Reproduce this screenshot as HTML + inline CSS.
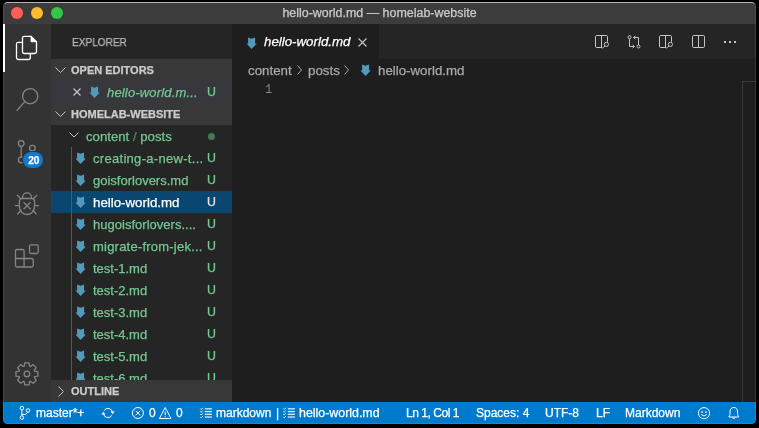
<!DOCTYPE html>
<html><head><meta charset="utf-8">
<style>
*{margin:0;padding:0;box-sizing:border-box}
html,body{width:759px;height:428px;background:#000;overflow:hidden;font-family:"Liberation Sans",sans-serif}
#win{position:absolute;left:0;top:0;width:759px;height:428px;clip-path:inset(2px 3px 4px 3px round 4.5px);background:#1e1e1e}
.a{position:absolute}
.t{position:absolute;white-space:pre;line-height:1;will-change:transform;-webkit-text-stroke:0.25px currentColor}
svg{position:absolute;overflow:visible}
#title{left:3px;top:2px;width:753px;height:22px;background:#3c3c3c}
#act{left:3px;top:24px;width:48px;height:378px;background:#333}
#side{left:51px;top:24px;width:181px;height:378px;background:#252526}
#tabs{left:232px;top:24px;width:524px;height:35px;background:#252526}
#tab{left:232px;top:24px;width:147px;height:35px;background:#1e1e1e}
#status{left:3px;top:402px;width:753px;height:22px;background:#007acc}
.hdr{position:absolute;left:51px;width:181px;height:22px;background:#383838}
.g{color:#73c991}
.row{position:absolute;left:51px;width:181px;height:22px}
.fn{position:absolute;left:93px;font-size:13px;color:#73c991;white-space:pre;line-height:22px;top:0}
.u{position:absolute;left:207px;font-size:13px;color:#73c991;line-height:22px;top:0}
.st{position:absolute;top:402px;font-size:12px;color:#fff;line-height:22px;white-space:pre;will-change:transform;-webkit-text-stroke:0.25px currentColor}
#border{position:absolute;left:3px;top:2px;width:753px;height:422px;border-radius:4.5px;border:1px solid rgba(255,255,255,0.1);border-top-color:rgba(255,255,255,0.6);pointer-events:none}
</style></head><body>
<div id="win">
  <div id="title" class="a"></div>
  <div id="act" class="a"></div>
  <div id="side" class="a"></div>
  <div id="tabs" class="a"></div>
  <div id="tab" class="a"></div>
  <div id="status" class="a"></div>

  <!-- traffic lights -->
  <div class="a" style="left:11px;top:7px;width:12px;height:12px;border-radius:50%;background:#fe5f57"></div>
  <div class="a" style="left:31px;top:7px;width:12px;height:12px;border-radius:50%;background:#febc2e"></div>
  <div class="a" style="left:51px;top:7px;width:12px;height:12px;border-radius:50%;background:#33c748"></div>
  <div class="t" style="left:3px;width:753px;text-align:center;top:7px;font-size:12.45px;color:#cccccc">hello-world.md — homelab-website</div>

  <!-- activity bar -->
  <div class="a" style="left:3px;top:24px;width:2px;height:48px;background:#fff"></div>

  <!-- files icon -->
  <svg class="a" style="left:0;top:0" width="759" height="428" fill="none" stroke-width="1.3">
    <path d="M22.5 42.3 H18.3 a1.8 1.8 0 0 0 -1.8 1.8 V57.7 a1.8 1.8 0 0 0 1.8 1.8 H28.5 a1.8 1.8 0 0 0 1.8 -1.8 V53.8" stroke="#ffffff"/>
    <path d="M24.3 36.3 H31 L36.5 41.8 V51.7 a1.8 1.8 0 0 1 -1.8 1.8 H24.3 a1.8 1.8 0 0 1 -1.8 -1.8 V38.1 a1.8 1.8 0 0 1 1.8 -1.8 Z" stroke="#ffffff"/>
    <path d="M31 36.3 L36.5 41.8 H31 Z" fill="#ffffff" stroke="#ffffff" stroke-width="0.8"/>
    <!-- search -->
    <circle cx="30.2" cy="96.2" r="7.6" stroke="#858585"/>
    <path d="M24.8 101.6 L16.8 110.8" stroke="#858585"/>
    <!-- git -->
    <circle cx="21.2" cy="143.5" r="2.8" stroke="#858585"/>
    <circle cx="32.4" cy="148.2" r="2.8" stroke="#858585"/>
    <circle cx="21.2" cy="160" r="2.8" stroke="#858585"/>
    <path d="M21.2 146.1 V157.4" stroke="#858585"/>
    <path d="M32.4 150.8 C32.4 154 28 155.5 23 158" stroke="#858585"/>
    <!-- debug -->
    <path d="M22.6 198.5 V197.2 a4.4 4.4 0 0 1 8.8 0 V198.5" stroke="#858585"/>
    <path d="M21.6 198.5 H32.4 Q34.6 198.5 34.6 202.5 V206 C34.6 211 31.5 214.5 27 214.5 C22.5 214.5 19.4 211 19.4 206 V202.5 Q19.4 198.5 21.6 198.5 Z" stroke="#858585"/>
    <path d="M23.5 202.2 L30.5 209.2 M30.5 202.2 L23.5 209.2" stroke="#858585"/>
    <path d="M17 195 L21 199 M37 195 L33 199 M14.8 205.6 H19.8 M34.2 205.6 H39 M17.4 214.3 L21.5 210 M36.6 214.3 L32.5 210" stroke="#858585"/>
    <!-- extensions -->
    <path d="M17 249.5 H22.6 a1.5 1.5 0 0 1 1.5 1.5 V258.5 H31.7 a1.5 1.5 0 0 1 1.5 1.5 V265.5 a1.5 1.5 0 0 1 -1.5 1.5 H17 a1.5 1.5 0 0 1 -1.5 -1.5 V251 a1.5 1.5 0 0 1 1.5 -1.5 Z" stroke="#858585"/>
    <path d="M15.5 258.5 H24.1 V267" stroke="#858585"/>
    <rect x="29.5" y="244.8" width="8.7" height="8.7" rx="1.5" stroke="#858585"/>
  </svg>
  <!-- badge -->
  <div class="a" style="left:22px;top:151px;width:22px;height:18px;border-radius:9px;background:#333"></div>
  <div class="a" style="left:23.3px;top:152px;width:19.6px;height:16px;border-radius:8px;background:#0e7ad1"></div>
  <div class="t" style="left:23.5px;top:152.8px;width:19.6px;height:16px;line-height:16px;text-align:center;font-size:10.2px;font-weight:bold;color:#fff">20</div>
  <!-- gear -->
  <svg class="a" style="left:0;top:0" width="759" height="428" fill="none" stroke="#858585" stroke-width="1.3">
    <path id="gear" d="M24.17 366.17 L24.78 362.90 L29.02 362.90 L29.63 366.17 L30.43 366.50 L33.18 364.63 L36.17 367.62 L34.30 370.37 L34.63 371.17 L37.90 371.78 L37.90 376.02 L34.63 376.63 L34.30 377.43 L36.17 380.18 L33.18 383.17 L30.43 381.30 L29.63 381.63 L29.02 384.90 L24.78 384.90 L24.17 381.63 L23.37 381.30 L20.62 383.17 L17.63 380.18 L19.50 377.43 L19.17 376.63 L15.90 376.02 L15.90 371.78 L19.17 371.17 L19.50 370.37 L17.63 367.62 L20.62 364.63 L23.37 366.50 Z" stroke-linejoin="round"/>
    <circle cx="26.9" cy="373.9" r="2.8"/>
  </svg>

  <!-- sidebar -->
  <div class="t" style="left:71.5px;top:37px;font-size:11.2px;transform:scaleX(0.9);transform-origin:0 0;color:#bbbbbb">EXPLORER</div>
  <div class="hdr" style="top:59px"></div>
  <div class="row" style="top:81px;background:#37373d"></div>
  <div class="hdr" style="top:103px"></div>
  <div class="t" style="left:71px;top:65px;font-size:11px;font-weight:bold;color:#cccccc">OPEN EDITORS</div>
  <div class="t" style="left:71px;top:109px;font-size:11px;font-weight:bold;color:#cccccc">HOMELAB-WEBSITE</div>

  <div class="row" style="top:191px;background:#094771"></div>
  <svg class="a" style="left:69px;top:132px" width="10" height="6" viewBox="0 0 10 6"><path d="M0.5 0.5 L5 5 L9.5 0.5" fill="none" stroke="#c5c5c5" stroke-width="1"/></svg>
  <div class="t g" style="left:85.8px;top:126px;font-size:13.2px;line-height:22px">content <span style="color:#4f8a60">/</span> posts</div>
  <div class="a" style="left:207.5px;top:132.5px;width:7px;height:7px;border-radius:50%;background:#48785a"></div>
  <svg class="a" style="left:76px;top:152px" width="11" height="13" viewBox="0 0 11 13"><path d="M1.1 0.6 L4.6 1.7 L8.1 0.6 L8.1 6.4 L9.8 6.4 L4.6 12 L-0.6 6.4 L1.1 6.4 Z" fill="#519aba"/></svg>
  <div class="t" style="left:93px;top:148px;font-size:13px;line-height:22px;color:#73c991;letter-spacing:0.3px">creating-a-new-t...</div>
  <div class="t" style="left:207.1px;top:147px;font-size:12.4px;line-height:22px;color:#73c991">U</div>
  <svg class="a" style="left:76px;top:174px" width="11" height="13" viewBox="0 0 11 13"><path d="M1.1 0.6 L4.6 1.7 L8.1 0.6 L8.1 6.4 L9.8 6.4 L4.6 12 L-0.6 6.4 L1.1 6.4 Z" fill="#519aba"/></svg>
  <div class="t" style="left:93px;top:170px;font-size:13px;line-height:22px;color:#73c991">goisforlovers.md</div>
  <div class="t" style="left:207.1px;top:169px;font-size:12.4px;line-height:22px;color:#73c991">U</div>
  <svg class="a" style="left:76px;top:196px" width="11" height="13" viewBox="0 0 11 13"><path d="M1.1 0.6 L4.6 1.7 L8.1 0.6 L8.1 6.4 L9.8 6.4 L4.6 12 L-0.6 6.4 L1.1 6.4 Z" fill="#519aba"/></svg>
  <div class="t" style="left:93px;top:192px;font-size:13.3px;line-height:22px;color:#ffffff">hello-world.md</div>
  <div class="t" style="left:207.1px;top:191px;font-size:12.4px;line-height:22px;color:#e0e0e0">U</div>
  <svg class="a" style="left:76px;top:218px" width="11" height="13" viewBox="0 0 11 13"><path d="M1.1 0.6 L4.6 1.7 L8.1 0.6 L8.1 6.4 L9.8 6.4 L4.6 12 L-0.6 6.4 L1.1 6.4 Z" fill="#519aba"/></svg>
  <div class="t" style="left:93px;top:214px;font-size:13px;line-height:22px;color:#73c991;letter-spacing:0.02px">hugoisforlovers....</div>
  <div class="t" style="left:207.1px;top:213px;font-size:12.4px;line-height:22px;color:#73c991">U</div>
  <svg class="a" style="left:76px;top:240px" width="11" height="13" viewBox="0 0 11 13"><path d="M1.1 0.6 L4.6 1.7 L8.1 0.6 L8.1 6.4 L9.8 6.4 L4.6 12 L-0.6 6.4 L1.1 6.4 Z" fill="#519aba"/></svg>
  <div class="t" style="left:93px;top:236px;font-size:13px;line-height:22px;color:#73c991;letter-spacing:0.22px">migrate-from-jek...</div>
  <div class="t" style="left:207.1px;top:235px;font-size:12.4px;line-height:22px;color:#73c991">U</div>
  <svg class="a" style="left:76px;top:262px" width="11" height="13" viewBox="0 0 11 13"><path d="M1.1 0.6 L4.6 1.7 L8.1 0.6 L8.1 6.4 L9.8 6.4 L4.6 12 L-0.6 6.4 L1.1 6.4 Z" fill="#519aba"/></svg>
  <div class="t" style="left:93px;top:258px;font-size:13px;line-height:22px;color:#73c991">test-1.md</div>
  <div class="t" style="left:207.1px;top:257px;font-size:12.4px;line-height:22px;color:#73c991">U</div>
  <svg class="a" style="left:76px;top:284px" width="11" height="13" viewBox="0 0 11 13"><path d="M1.1 0.6 L4.6 1.7 L8.1 0.6 L8.1 6.4 L9.8 6.4 L4.6 12 L-0.6 6.4 L1.1 6.4 Z" fill="#519aba"/></svg>
  <div class="t" style="left:93px;top:280px;font-size:13px;line-height:22px;color:#73c991">test-2.md</div>
  <div class="t" style="left:207.1px;top:279px;font-size:12.4px;line-height:22px;color:#73c991">U</div>
  <svg class="a" style="left:76px;top:306px" width="11" height="13" viewBox="0 0 11 13"><path d="M1.1 0.6 L4.6 1.7 L8.1 0.6 L8.1 6.4 L9.8 6.4 L4.6 12 L-0.6 6.4 L1.1 6.4 Z" fill="#519aba"/></svg>
  <div class="t" style="left:93px;top:302px;font-size:13px;line-height:22px;color:#73c991">test-3.md</div>
  <div class="t" style="left:207.1px;top:301px;font-size:12.4px;line-height:22px;color:#73c991">U</div>
  <svg class="a" style="left:76px;top:328px" width="11" height="13" viewBox="0 0 11 13"><path d="M1.1 0.6 L4.6 1.7 L8.1 0.6 L8.1 6.4 L9.8 6.4 L4.6 12 L-0.6 6.4 L1.1 6.4 Z" fill="#519aba"/></svg>
  <div class="t" style="left:93px;top:324px;font-size:13px;line-height:22px;color:#73c991">test-4.md</div>
  <div class="t" style="left:207.1px;top:323px;font-size:12.4px;line-height:22px;color:#73c991">U</div>
  <svg class="a" style="left:76px;top:350px" width="11" height="13" viewBox="0 0 11 13"><path d="M1.1 0.6 L4.6 1.7 L8.1 0.6 L8.1 6.4 L9.8 6.4 L4.6 12 L-0.6 6.4 L1.1 6.4 Z" fill="#519aba"/></svg>
  <div class="t" style="left:93px;top:346px;font-size:13px;line-height:22px;color:#73c991">test-5.md</div>
  <div class="t" style="left:207.1px;top:345px;font-size:12.4px;line-height:22px;color:#73c991">U</div>
  <svg class="a" style="left:76px;top:372px" width="11" height="13" viewBox="0 0 11 13"><path d="M1.1 0.6 L4.6 1.7 L8.1 0.6 L8.1 6.4 L9.8 6.4 L4.6 12 L-0.6 6.4 L1.1 6.4 Z" fill="#519aba"/></svg>
  <div class="t" style="left:93px;top:368px;font-size:13px;line-height:22px;color:#73c991">test-6.md</div>
  <div class="t" style="left:207.1px;top:367px;font-size:12.4px;line-height:22px;color:#73c991">U</div>
  <div class="a" style="left:71px;top:147px;width:1px;height:233px;background:#585858"></div>
  <svg class="a" style="left:55px;top:67px" width="11" height="6" viewBox="0 0 11 6"><path d="M0.5 0.5 L5.5 5.5 L10.5 0.5" fill="none" stroke="#c5c5c5" stroke-width="1"/></svg>
  <svg class="a" style="left:55px;top:111px" width="11" height="6" viewBox="0 0 11 6"><path d="M0.5 0.5 L5.5 5.5 L10.5 0.5" fill="none" stroke="#c5c5c5" stroke-width="1"/></svg>
  <svg class="a" style="left:73px;top:88px" width="8" height="8" viewBox="0 0 8 8"><path d="M0.5 0.5 L7.5 7.5 M7.5 0.5 L0.5 7.5" fill="none" stroke="#c5c5c5" stroke-width="1.15"/></svg>
  <svg class="a" style="left:90px;top:86px" width="11" height="13" viewBox="0 0 11 13"><path d="M1.1 0.6 L4.6 1.7 L8.1 0.6 L8.1 6.4 L9.8 6.4 L4.6 12 L-0.6 6.4 L1.1 6.4 Z" fill="#519aba"/></svg>
  <div class="t" style="left:107px;top:82px;font-size:13px;line-height:22px;color:#73c991;font-style:italic;letter-spacing:0.17px">hello-world.m...</div>
  <div class="t" style="left:207.1px;top:81px;font-size:12.4px;line-height:22px;color:#73c991">U</div>
  <div class="hdr" style="top:380px"></div>
  <div class="t" style="left:71px;top:386px;font-size:11px;font-weight:bold;color:#cccccc">OUTLINE</div>
  <svg class="a" style="left:58px;top:386px" width="6" height="11" viewBox="0 0 6 11"><path d="M0.5 0.5 L5.5 5.5 L0.5 10.5" fill="none" stroke="#c5c5c5" stroke-width="1"/></svg>

  <!-- editor -->

  <!-- tab -->
  <svg class="a" style="left:247px;top:36.5px" width="11" height="13" viewBox="0 0 11 13"><path d="M1.1 0.6 L4.6 1.7 L8.1 0.6 L8.1 6.4 L9.8 6.4 L4.6 12 L-0.6 6.4 L1.1 6.4 Z" fill="#519aba"/></svg>
  <div class="t" style="left:264px;top:35px;font-size:13.3px;color:#ffffff;font-style:italic">hello-world.md</div>
  <svg class="a" style="left:358px;top:38px" width="9" height="9" viewBox="0 0 9 9"><path d="M0.5 0.5 L8.5 8.5 M8.5 0.5 L0.5 8.5" fill="none" stroke="#c5c5c5" stroke-width="1.15"/></svg>
  <!-- breadcrumbs -->
  <div class="t" style="left:248px;top:64px;font-size:13.3px;color:#a9a9a9">content</div>
  <svg class="a" style="left:297px;top:65px" width="5" height="10" viewBox="0 0 5 10"><path d="M0.5 0.5 L4.5 5 L0.5 9.5" fill="none" stroke="#a9a9a9" stroke-width="1"/></svg>
  <div class="t" style="left:308px;top:64px;font-size:13.3px;color:#a9a9a9">posts</div>
  <svg class="a" style="left:344px;top:65px" width="5" height="10" viewBox="0 0 5 10"><path d="M0.5 0.5 L4.5 5 L0.5 9.5" fill="none" stroke="#a9a9a9" stroke-width="1"/></svg>
  <svg class="a" style="left:361px;top:64px" width="11" height="13" viewBox="0 0 11 13"><path d="M1.1 0.6 L4.6 1.7 L8.1 0.6 L8.1 6.4 L9.8 6.4 L4.6 12 L-0.6 6.4 L1.1 6.4 Z" fill="#519aba"/></svg>
  <div class="t" style="left:377.5px;top:64px;font-size:13.3px;color:#a9a9a9">hello-world.md</div>
  <div class="t" style="left:265px;top:84px;font-size:12px;color:#858585;font-family:'Liberation Mono',monospace;-webkit-text-stroke:0">1</div>
  <!-- editor actions -->
  <svg class="a" style="left:0;top:0" width="759" height="428" fill="none" stroke="#c5c5c5" stroke-width="1">
    <path d="M602.2 47.5 H596.7 Q595.5 47.5 595.5 46.3 V36.7 Q595.5 35.5 596.7 35.5 H606.3 Q607.5 35.5 607.5 36.7 V41.8"/>
    <path d="M601.5 35.5 V47.5"/>
    <circle cx="606.4" cy="44.4" r="2.1"/>
    <path d="M604.9 45.9 L602.3 48.5"/>
    <path d="M666.2 47.5 H660.7 Q659.5 47.5 659.5 46.3 V36.7 Q659.5 35.5 660.7 35.5 H670.3 Q671.5 35.5 671.5 36.7 V41.8"/>
    <path d="M665.5 35.5 V47.5"/>
    <circle cx="670.4" cy="44.4" r="2.1"/>
    <path d="M668.9 45.9 L666.3 48.5"/>
    <circle cx="629.5" cy="37.2" r="1.5"/>
    <path d="M629.5 38.7 V46.5 H634.2"/><path d="M632.6 44.7 L634.4 46.5 L632.6 48.3"/>
    <circle cx="638.5" cy="46.5" r="1.5"/>
    <path d="M638.5 45 V37.5 H633.6"/><path d="M635.4 35.7 L633.6 37.5 L635.4 39.3"/>
    <path d="M693.7 35.5 H703.3 Q704.5 35.5 704.5 36.7 V46.3 Q704.5 47.5 703.3 47.5 H693.7 Q692.5 47.5 692.5 46.3 V36.7 Q692.5 35.5 693.7 35.5 Z"/>
    <path d="M698.5 35.5 V47.5"/>
  </svg>
  <div class="a" style="left:724px;top:41px;width:2px;height:2px;background:#c5c5c5"></div>
  <div class="a" style="left:729px;top:41px;width:2px;height:2px;background:#c5c5c5"></div>
  <div class="a" style="left:734px;top:41px;width:2px;height:2px;background:#c5c5c5"></div>
  <div class="a" style="left:742px;top:81px;width:1px;height:321px;background:#3a3a3a"></div>
  <div class="a" style="left:742px;top:81px;width:14px;height:1px;background:#3a3a3a"></div>


  <!-- status bar -->
  <svg class="a" style="left:0;top:0" width="759" height="428" fill="none" stroke="#ffffff" stroke-width="1">
    <!-- branch -->
    <circle cx="21.9" cy="408.1" r="1.8"/>
    <circle cx="21.9" cy="417.6" r="1.8"/>
    <circle cx="28" cy="410.5" r="1.8"/>
    <path d="M21.9 409.9 V415.8"/>
    <path d="M27.6 412.3 L25.8 414.4 H21.9"/>
    <!-- sync -->
    <path d="M104.14 410.49 A4.6 4.6 0 0 1 112.53 412.2"/>
    <path d="M111.98 415.3 A4.6 4.6 0 0 1 103.47 413.8"/>
    <!-- error -->
    <circle cx="137.9" cy="413" r="5.5"/>
    <path d="M135.6 410.7 L140.2 415.3 M140.2 410.7 L135.6 415.3"/>
    <!-- warning -->
    <path d="M165.2 407.5 L171 418.5 H159.4 Z" stroke-linejoin="round"/>
    <path d="M165.2 411.5 V415.3 M165.2 416.3 V417.3"/>
    <!-- smiley -->
    <circle cx="704" cy="413.2" r="5.6"/>
    <path d="M701.3 414.5 Q704 417.5 706.7 414.5"/>
    <!-- bell -->
    <path d="M729 417 V416.3 C730 415.5 730 414 730 412 C730 409 731.5 407.5 733.8 407.5 C736.1 407.5 737.6 409 737.6 412 C737.6 414 737.6 415.5 738.6 416.3 V417 Z" stroke-linejoin="round"/>
    <path d="M732.3 417.5 Q733.8 419.8 735.3 417.5"/>
  </svg>
  <svg class="a" style="left:0;top:0" width="759" height="428" fill="#ffffff">
    <circle cx="702.1" cy="412.1" r="0.9"/>
    <path d="M110.6 411.6 L114.6 411.6 L112.6 414.3 Z"/>
    <path d="M101.4 414.4 L105.4 414.4 L103.4 411.7 Z"/>
    <circle cx="705.9" cy="412.1" r="0.9"/>
  </svg>
  <div class="st" style="left:36px">master*+</div>
  <div class="st" style="left:148.5px">0</div>
  <div class="st" style="left:175.5px">0</div>
  <div class="st" style="left:216px">markdown</div>
  <div class="st" style="left:275.5px">|</div>
  <div class="st" style="left:298.5px;font-size:12.4px">hello-world.md</div>
  <div class="st" style="left:406px;letter-spacing:-0.45px">Ln 1, Col 1</div>
  <div class="st" style="left:476px">Spaces: 4</div>
  <div class="st" style="left:545px">UTF-8</div>
  <div class="st" style="left:596px">LF</div>
  <div class="st" style="left:625px">Markdown</div>
  <svg class="a" style="left:200px;top:404px" width="14" height="16" viewBox="0 0 14 16" fill="none" stroke="#ffffff"><path d="M0.3 4.60 L1.2 5.50 L2.9 3.80" stroke-width="0.9"/><path d="M4.8 4.8 H11.9" stroke-width="1.3" stroke-opacity="0.85"/><path d="M0.3 7.35 L1.2 8.25 L2.9 6.55" stroke-width="0.9"/><path d="M4.8 7.55 H11.9" stroke-width="1.3" stroke-opacity="0.85"/><path d="M0.3 10.10 L1.2 11.00 L2.9 9.30" stroke-width="0.9"/><path d="M4.8 10.3 H11.9" stroke-width="1.3" stroke-opacity="0.85"/><path d="M0.3 12.85 L1.2 13.75 L2.9 12.05" stroke-width="0.9"/><path d="M4.8 13.05 H11.9" stroke-width="1.3" stroke-opacity="0.85"/></svg>
  <svg class="a" style="left:283.4px;top:404px" width="14" height="16" viewBox="0 0 14 16" fill="none" stroke="#ffffff"><path d="M0.3 4.60 L1.2 5.50 L2.9 3.80" stroke-width="0.9"/><path d="M4.8 4.8 H11.9" stroke-width="1.3" stroke-opacity="0.85"/><path d="M0.3 7.35 L1.2 8.25 L2.9 6.55" stroke-width="0.9"/><path d="M4.8 7.55 H11.9" stroke-width="1.3" stroke-opacity="0.85"/><path d="M0.3 10.10 L1.2 11.00 L2.9 9.30" stroke-width="0.9"/><path d="M4.8 10.3 H11.9" stroke-width="1.3" stroke-opacity="0.85"/><path d="M0.3 12.85 L1.2 13.75 L2.9 12.05" stroke-width="0.9"/><path d="M4.8 13.05 H11.9" stroke-width="1.3" stroke-opacity="0.85"/></svg>
  <div id="border"></div>
</div>
</body></html>
